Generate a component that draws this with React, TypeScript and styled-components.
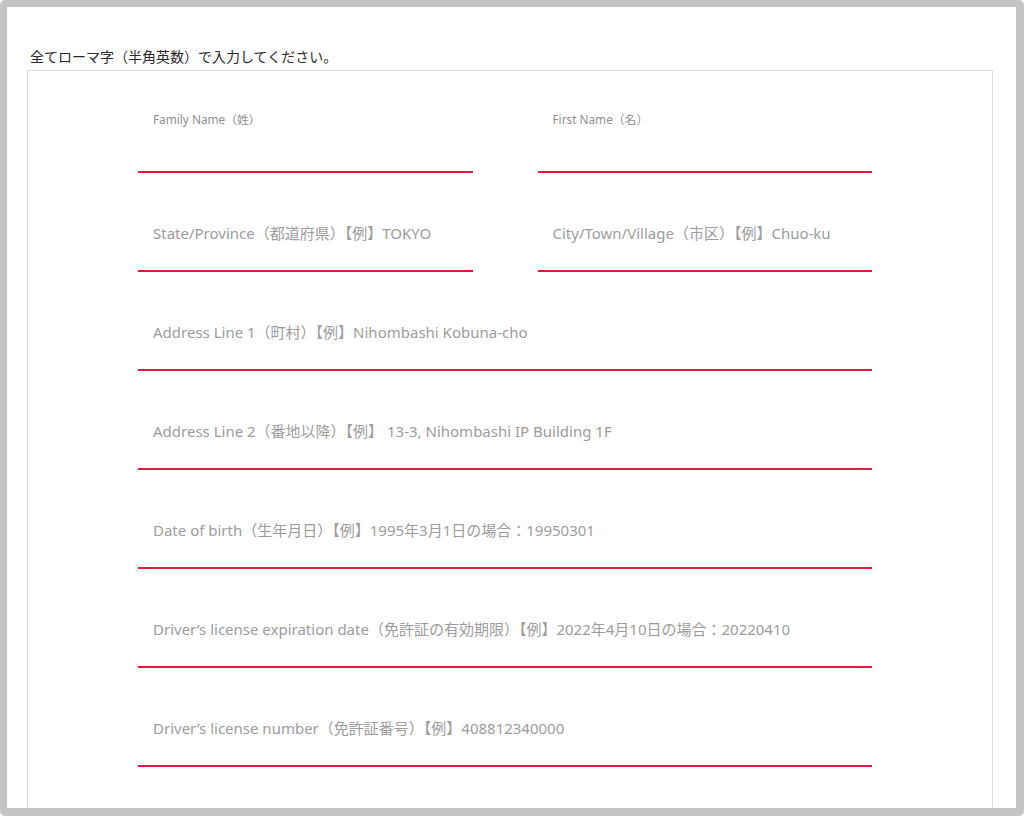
import React from 'react';
import styled, { createGlobalStyle } from 'styled-components';

const GlobalStyle = createGlobalStyle`
  html, body {
    margin: 0;
    padding: 0;
    background: #ffffff;
  }
  * {
    box-sizing: border-box;
  }
`;

const fields = [
  'Address Line 1（町村）【例】Nihombashi Kobuna-cho',
  'Address Line 2（番地以降）【例】 13-3, Nihombashi IP Building 1F',
  'Date of birth（生年月日）【例】1995年3月1日の場合：19950301',
  'Driver’s license expiration date（免許証の有効期限）【例】2022年4月10日の場合：20220410',
  'Driver’s license number（免許証番号）【例】408812340000',
];

const App = () => {
  return (
    <Frame>
      <GlobalStyle />
      <Content>
        <Notice>全てローマ字（半角英数）で入力してください。</Notice>
        <FormBox>
          <Pair>
            <div>
              <SmallLabel>Family Name（姓）</SmallLabel>
              <NameInput type="text" aria-label="Family Name" />
            </div>
            <div>
              <SmallLabel>First Name（名）</SmallLabel>
              <NameInput type="text" aria-label="First Name" />
            </div>
          </Pair>
          <Pair>
            <TextInput type="text" placeholder="State/Province（都道府県）【例】TOKYO" />
            <TextInput type="text" placeholder="City/Town/Village（市区）【例】Chuo-ku" />
          </Pair>
          {fields.map((text) => (
            <TextInput key={text} type="text" placeholder={text} />
          ))}
        </FormBox>
      </Content>
    </Frame>
  );
};

export default App;

const Frame = styled.div`
  width: 1024px;
  height: 816px;
  overflow: hidden;
  border-style: solid;
  border-color: #c4c4c4;
  border-width: 7px 8px 8px 7px;
  border-radius: 5px;
  background: #ffffff;
  font-family: 'Noto Sans', 'Noto Sans CJK JP', sans-serif;
`;

const Content = styled.div`
  padding: 39px 23px 0 20px;
`;

const Notice = styled.p`
  margin: 0 0 3px 3px;
  font-size: 14px;
  line-height: 21px;
  color: #2a2a2a;
`;

const FormBox = styled.div`
  border: 1px solid #dcdcdc;
  border-bottom: none;
  padding: 40px 120px 60px 110px;
  display: flex;
  flex-direction: column;
  gap: 39px;
`;

const Pair = styled.div`
  display: grid;
  grid-template-columns: 1fr 1fr;
  column-gap: 65px;
`;

const SmallLabel = styled.div`
  padding-left: 15px;
  font-size: 11.8px;
  line-height: 16px;
  color: #909090;
`;

const NameInput = styled.input`
  display: block;
  width: 100%;
  height: 46px;
  border: none;
  border-bottom: 2px solid #e01b3f;
  outline: none;
  background: transparent;
`;

const TextInput = styled.input`
  display: block;
  width: 100%;
  height: 60px;
  padding: 12px 15px 28px;
  border: none;
  border-bottom: 2px solid #e01b3f;
  outline: none;
  background: transparent;
  font-family: inherit;
  font-size: 15px;
  line-height: 18px;
  color: #333;

  &::placeholder {
    color: #9d9d9d;
    opacity: 1;
  }
`;
